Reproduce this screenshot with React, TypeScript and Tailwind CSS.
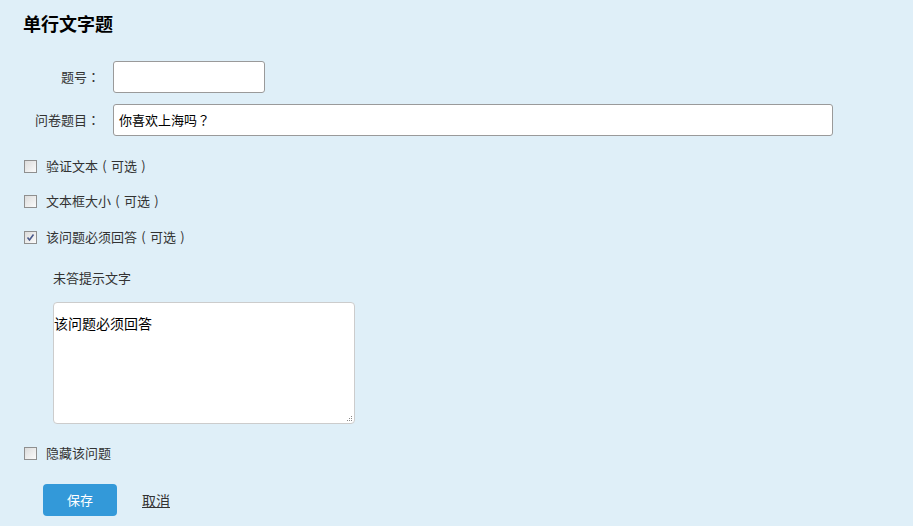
import React from "react";

const font = { fontFamily: '"Noto Sans CJK SC", "Noto Sans", sans-serif' };
const tc = { fontFamily: '"Noto Sans CJK TC", "Noto Sans CJK SC", sans-serif' };

function Box({ checked = false }: { checked?: boolean }) {
  return (
    <span className="relative flex h-[13px] w-[13px] shrink-0 items-center justify-center border border-[#8f8f8f] bg-gradient-to-br from-[#dcdcdc] to-[#fbfbfb]">
      {checked && (
        <svg width="9" height="9" viewBox="0 0 9 9" className="absolute">
          <path d="M1.5 4.5 L3.5 7 L7.5 1.5" fill="none" stroke="#4a5a8c" strokeWidth="1.6" />
        </svg>
      )}
    </span>
  );
}

function Paren({ c }: { c: string }) {
  return <span className="inline-block w-[13px] text-center">{c}</span>;
}

function CheckRow({
  label,
  optional,
  checked,
  className = "",
}: {
  label: string;
  optional?: boolean;
  checked?: boolean;
  className?: string;
}) {
  return (
    <div className={`flex h-[20px] items-center pl-[1px] ${className}`}>
      <Box checked={checked} />
      <span className="ml-[9px] whitespace-nowrap text-[13px] text-[#333]">
        {label}
        {optional && (
          <>
            <Paren c="(" />
            可选
            <Paren c=")" />
          </>
        )}
      </span>
    </div>
  );
}

export default function App() {
  return (
    <div className="min-h-[526px] w-full bg-[#dfeff8] px-[23px] pt-[11px]" style={font}>
      <h1 className="text-[18px] font-bold leading-[24px] text-black">单行文字题</h1>

      <div className="mt-[26px] flex items-center">
        <label className="w-[77px] text-right text-[13px] text-[#333]">
          题号<span style={tc}>：</span>
        </label>
        <input className="ml-[13px] h-[32px] w-[152px] rounded-[3px] border border-[#9a9a9a] bg-white px-[5px] text-[13px] outline-none" />
      </div>
      <div className="mt-[11px] flex items-center">
        <label className="w-[77px] whitespace-nowrap text-right text-[13px] text-[#333]">
          问卷题目<span style={tc}>：</span>
        </label>
        <div className="ml-[13px] flex h-[32px] w-[720px] items-center rounded-[3px] border border-[#9a9a9a] bg-white px-[5px] text-[13px] text-black">
          你喜欢上海吗<span style={tc}>？</span>
        </div>
      </div>

      <CheckRow className="mt-[20px]" label="验证文本" optional />
      <CheckRow className="mt-[15px]" label="文本框大小" optional />
      <CheckRow className="mt-[16px]" label="该问题必须回答" optional checked />

      <div className="ml-[30px] mt-[21px]">
        <div className="text-[13px] leading-[20px] text-[#333]">未答提示文字</div>
        <div className="relative mt-[14px] h-[122px] w-[302px]">
          <textarea
            defaultValue="该问题必须回答"
            className="h-full w-full resize-none rounded-[4px] border border-[#cccccc] bg-white pt-[12px] text-[14px] leading-[17px] text-black outline-none"
          />
          <div className="pointer-events-none absolute bottom-[3px] right-[3px] grid grid-cols-3 gap-[1px]">
            <span />
            <span />
            <span className="h-[1px] w-[1px] bg-[#888]" />
            <span />
            <span className="h-[1px] w-[1px] bg-[#888]" />
            <span className="h-[1px] w-[1px] bg-[#888]" />
            <span className="h-[1px] w-[1px] bg-[#888]" />
            <span className="h-[1px] w-[1px] bg-[#888]" />
            <span className="h-[1px] w-[1px] bg-[#888]" />
          </div>
        </div>
      </div>

      <CheckRow className="mt-[19px]" label="隐藏该问题" />

      <div className="mt-[21px] flex items-center pl-[20px]">
        <button className="h-[32px] w-[74px] rounded-[4px] bg-[#3399d9] text-[13px] text-white">保存</button>
        <a className="ml-[25px] cursor-pointer text-[14px] text-[#333] underline">取消</a>
      </div>
    </div>
  );
}
